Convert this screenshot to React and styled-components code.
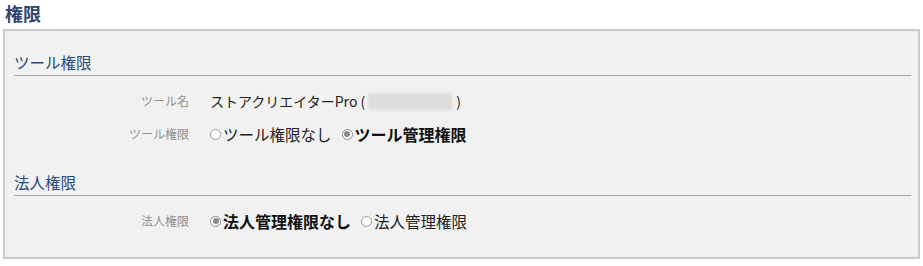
import React from 'react';
import styled, { createGlobalStyle } from 'styled-components';

const GlobalStyle = createGlobalStyle`
  body {
    margin: 0;
    background: #ffffff;
    font-family: "Noto Sans CJK JP", "Noto Sans", sans-serif;
  }
`;

const Page = styled.div`
  padding: 0 3px;
  width: 917px;
`;

const Title = styled.h2`
  margin: 0;
  padding: 2px 0 0 2px;
  height: 27px;
  font-size: 18px;
  line-height: 22px;
  font-weight: bold;
  color: #2e4470;
`;

const Panel = styled.div`
  background: #f1f1f1;
  border: 2px solid #cbcbcb;
  padding: 21px 7px 24px 9px;
`;

const SectionTitle = styled.h3`
  margin: ${p => (p.first ? '0' : '26px')} 0 0;
  padding: 0 0 3px;
  font-size: 15.5px;
  line-height: 20px;
  font-weight: normal;
  color: #2d4a78;
  border-bottom: 1px solid #a9a9a9;
`;

const Rows = styled.div`
  display: grid;
  grid-template-columns: 175px 1fr;
  column-gap: 21px;
  row-gap: 9px;
  margin-top: 13px;
`;

const Label = styled.div`
  text-align: right;
  font-size: 12px;
  line-height: 24px;
  color: #909090;
`;

const Value = styled.div`
  display: flex;
  align-items: center;
  height: 24px;
  font-size: 14px;
  color: #222;
`;

const Blurred = styled.span`
  display: inline-block;
  width: 84px;
  height: 17px;
  margin: 0 4px 0 3px;
  background: #dddddd;
  filter: blur(1px);
`;

const Option = styled.label`
  display: inline-flex;
  align-items: center;
  margin-right: ${p => (p.last ? '0' : '10px')};
  font-size: ${p => (p.checked ? '16px' : '15.5px')};
  font-weight: ${p => (p.checked ? 'bold' : 'normal')};
  color: ${p => (p.checked ? '#111' : '#222')};
`;

const Radio = styled.span`
  position: relative;
  display: inline-block;
  box-sizing: border-box;
  width: 11px;
  height: 11px;
  margin-right: 2px;
  border-radius: 50%;
  border: 1px solid ${p => (p.checked ? '#8a8a8a' : '#9a9a9a')};
  background: #fff;

  &::after {
    content: "";
    display: ${p => (p.checked ? 'block' : 'none')};
    position: absolute;
    left: 1.5px;
    top: 1.5px;
    width: 6px;
    height: 6px;
    border-radius: 50%;
    background: #8a8a8a;
  }
`;

const RadioOption = ({ checked, last, children }) => (
  <Option checked={checked} last={last}>
    <Radio checked={checked} />
    {children}
  </Option>
);

export default function App() {
  return (
    <Page>
      <GlobalStyle />
      <Title>権限</Title>
      <Panel>
        <SectionTitle first>ツール権限</SectionTitle>
        <Rows>
          <Label>ツール名</Label>
          <Value>
            ストアクリエイターPro (<Blurred />)
          </Value>
          <Label>ツール権限</Label>
          <Value>
            <RadioOption>ツール権限なし</RadioOption>
            <RadioOption checked last>ツール管理権限</RadioOption>
          </Value>
        </Rows>
        <SectionTitle>法人権限</SectionTitle>
        <Rows>
          <Label>法人権限</Label>
          <Value>
            <RadioOption checked>法人管理権限なし</RadioOption>
            <RadioOption last>法人管理権限</RadioOption>
          </Value>
        </Rows>
      </Panel>
    </Page>
  );
}
